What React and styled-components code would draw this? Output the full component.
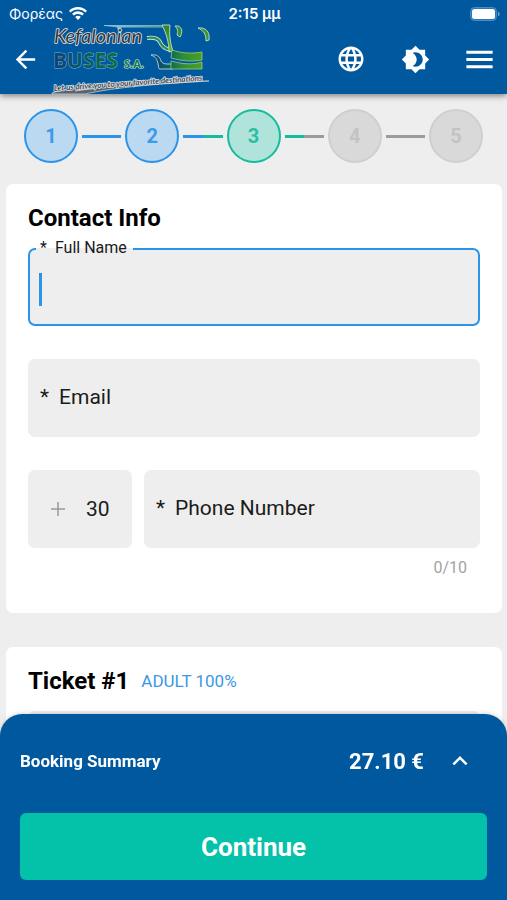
import React, { useState } from 'react';
import styled, { createGlobalStyle, css } from 'styled-components';
import {
  MdArrowBack,
  MdBrightness4,
  MdKeyboardArrowUp,
  MdLanguage,
  MdMenu,
} from 'react-icons/md';

const GlobalStyle = createGlobalStyle`
  * {
    box-sizing: border-box;
  }

  body {
    margin: 0;
    background: #eeeeee;
    color: #000;
    font-family: Roboto, 'Noto Sans', sans-serif;
  }

  button,
  input {
    font-family: inherit;
  }
`

const Page = styled.div`
  height: 100vh;
  overflow: hidden;
`

const Header = styled.header`
  position: relative;
  background: #00589f;
  color: #fff;
  box-shadow: 0 2px 6px rgba(0, 0, 0, 0.45);
`

const StatusBar = styled.div`
  display: grid;
  grid-template-columns: 1fr auto 1fr;
  align-items: center;
  height: 24px;
  padding: 4px 7px 0 9px;
  font-family: Inter, sans-serif;
  font-size: 14px;
  line-height: 20px;
`

const Carrier = styled.div`
  display: flex;
  align-items: center;
  gap: 6px;
`

const Clock = styled.div`
  font-size: 15px;
  font-weight: 600;
`

const BatteryWrap = styled.div`
  display: flex;
  justify-content: flex-end;
`

const Nav = styled.nav`
  display: flex;
  align-items: center;
  height: 70px;
  padding: 0 4px 0 1px;
`

const IconBtn = styled.button`
  display: flex;
  align-items: center;
  justify-content: center;
  width: 48px;
  height: 48px;
  padding: 0;
  border: none;
  background: none;
  color: #fff;
  cursor: pointer;
`

const LogoSvg = styled.svg`
  flex: none;
  overflow: visible;
`

const NavActions = styled.div`
  display: flex;
  gap: 16px;
  margin-left: auto;
`

const Steps = styled.ol`
  display: flex;
  align-items: center;
  margin: 0;
  padding: 15px 24px 21px;
  list-style: none;
`

const stepColors = {
  done: css`
    border-color: #2b94e9;
    background: #bbd9f0;
    color: #3d9aea;
  `,
  active: css`
    border-color: #15bb9d;
    background: #b0e4da;
    color: #2abfa4;
  `,
  todo: css`
    border-color: #cfcfcf;
    background: #d9d9d9;
    color: #c3c3c3;
  `,
}

const Step = styled.li`
  display: flex;
  align-items: center;
  justify-content: center;
  flex: none;
  width: 54px;
  height: 54px;
  border: 2px solid;
  border-radius: 50%;
  font-size: 20px;
  font-weight: 700;
  ${({ $state }) => stepColors[$state]}
`

const StepLine = styled.li`
  flex: 1;
  height: 3px;
  margin: 0 4px;
  background: linear-gradient(
    to right,
    ${({ $from }) => $from} 50%,
    ${({ $to }) => $to} 50%
  );
`

const Card = styled.section`
  margin: 0 5px 34px 6px;
  padding: 20px 22px 35px;
  border-radius: 7px;
  background: #fff;
`

const CardHead = styled.div`
  display: flex;
  align-items: center;
  gap: 12px;
  margin-bottom: 16px;
`

const CardTitle = styled.h2`
  margin: 0;
  font-size: 24px;
  font-weight: 700;
  line-height: 28px;
`

const Fare = styled.span`
  color: #3c97e6;
  font-size: 17px;
`

const Fields = styled.div`
  display: flex;
  flex-direction: column;
  gap: 33px;
`

const PhoneRow = styled.div`
  display: grid;
  grid-template-columns: 104px 1fr;
  gap: 12px;
`

const Field = styled.div`
  position: relative;
  display: flex;
  align-items: center;
  height: 78px;
  border: 2px solid ${({ $active }) => ($active ? '#2b94e9' : '#eeeeee')};
  border-radius: 7px;
  background: #eeeeee;
`

const Input = styled.input`
  flex: 1;
  min-width: 0;
  height: 100%;
  padding: 0 ${({ $inset }) => $inset || 10}px;
  border: none;
  outline: none;
  background: none;
  color: #1b1b1b;
  font-size: 21px;
`

const Label = styled.label`
  position: absolute;
  left: 10px;
  display: flex;
  gap: 10px;
  padding-bottom: 2px;
  color: #1b1b1b;
  font-size: 21px;
  line-height: 24px;
  pointer-events: none;
  ${({ $floating }) =>
    $floating &&
    css`
      top: -12px;
      left: 6px;
      gap: 8px;
      padding: 0 6px 0 4px;
      background: linear-gradient(#fff 50%, #eeeeee 50%);
      font-size: 16px;
      line-height: 20px;
    `}
`

const Caret = styled.span`
  position: absolute;
  top: 23px;
  left: 9px;
  width: 3px;
  height: 33px;
  background: #2b94e9;
`

const Prefix = styled.span`
  display: flex;
  padding-left: 20px;
`

const Counter = styled.div`
  padding-right: 13px;
  color: #a3a3a3;
  font-size: 16px;
  line-height: 20px;
  text-align: right;
`

const PhoneBlock = styled.div`
  display: flex;
  flex-direction: column;
  gap: 10px;
`

const Summary = styled.footer`
  position: fixed;
  right: 0;
  bottom: 0;
  left: 0;
  padding: 23px 20px 20px;
  border-radius: 22px 22px 0 0;
  background: #00589f;
  color: #fff;
  box-shadow: 0 -1px 4px rgba(0, 0, 0, 0.15);
`

const SummaryRow = styled.div`
  display: flex;
  align-items: center;
  margin-bottom: 28px;
  padding-right: 3px;
`

const SummaryTitle = styled.div`
  flex: 1;
  font-size: 17px;
  font-weight: 700;
`

const Price = styled.div`
  margin-right: 12px;
  font-size: 22px;
  font-weight: 700;
`

const ContinueBtn = styled.button`
  width: 100%;
  height: 67px;
  border: none;
  border-radius: 6px;
  background: #04c1a9;
  color: #fff;
  font-size: 26px;
  font-weight: 700;
  cursor: pointer;
`

const WifiIcon = () => (
  <svg width="18" height="14" viewBox="0 0 18 14" fill="#fff" aria-hidden="true">
    <path d="M9 0c3.500 0 6.700 1.400 9 3.700l-1.500 1.700A10.700 10.700 0 0 0 9 2.600c-2.900 0-5.500 1.100-7.500 2.800L0 3.700A12.800 12.800 0 0 1 9 0z" />
    <path d="M9 4.300c2.300 0 4.400.9 5.900 2.400l-1.600 1.800A6.200 6.200 0 0 0 9 6.900c-1.700 0-3.200.6-4.300 1.600L3.100 6.700A8.400 8.400 0 0 1 9 4.300z" />
    <path d="M9 8.700c1.100 0 2.100.4 2.800 1.200L9 13l-2.800-3.100C6.900 9.100 7.900 8.700 9 8.700z" />
  </svg>
)

const BatteryIcon = () => (
  <svg width="30" height="14" viewBox="0 0 30 14" aria-hidden="true">
    <rect x="0.500" y="0.500" width="26" height="13" rx="4" fill="#2f77b3" stroke="#4f8cc0" />
    <rect x="2" y="2" width="23" height="10" rx="2.500" fill="#fff" />
    <path d="M28 4.500c1 .4 1.600 1.300 1.600 2.500S29 9.100 28 9.500z" fill="#6f9fca" />
  </svg>
)

const Logo = () => (
  <LogoSvg width="162" height="70" viewBox="0 0 162 70" role="img" aria-label="Kefalonian Buses S.A.">
    <defs>
      <linearGradient id="busesText" x1="0" x2="1">
        <stop offset="0" stopColor="#123f78" />
        <stop offset="0.6" stopColor="#08605e" />
        <stop offset="1" stopColor="#08733c" />
      </linearGradient>
      <linearGradient id="busBody" x1="0" x2="1">
        <stop offset="0" stopColor="#12684f" />
        <stop offset="0.4" stopColor="#2f8f33" />
        <stop offset="1" stopColor="#4c9f20" />
      </linearGradient>
      <linearGradient id="pillar" x1="0" x2="0" y1="0" y2="1">
        <stop offset="0" stopColor="#2f7f2c" />
        <stop offset="1" stopColor="#5db52a" />
      </linearGradient>
      <linearGradient id="bumper" x1="0" x2="1">
        <stop offset="0" stopColor="#0b3f74" />
        <stop offset="1" stopColor="#12684f" />
      </linearGradient>
      <linearGradient id="roof" x1="0" x2="1">
        <stop offset="0" stopColor="#8fd1f4" />
        <stop offset="1" stopColor="#37824d" />
      </linearGradient>
    </defs>
    {/* road */}
    <path d="M3 69c24-8 80-11 157-12-52 3-92 6-124 13H3z" fill="#5c646b" stroke="#c2ccd4" strokeWidth="0.8" />
    <path d="M26 67l22-3m10-1l22-2" stroke="#d9dfe3" strokeWidth="0.8" />
    {/* bus */}
    <path d="M55 1.500h65l-1 1.600H73l-4 2-1-2.300z" fill="url(#roof)" stroke="#a9d3e6" strokeWidth="0.6" />
    <path d="M98 14c7-1 11 0 13 4 2 5 5 7 11 8" fill="none" stroke="#c8e8df" strokeWidth="4" />
    <path d="M98 14c7-1 11 0 13 4 2 5 5 7 11 8" fill="none" stroke="#2d8a5a" strokeWidth="2.200" />
    <path d="M113 1h8c-1 8 0 18 3 26l-4 1c0-10-3-19-7-27z" fill="url(#pillar)" stroke="#bfe0cf" strokeWidth="0.900" />
    <path d="M102 31c6-1 9 2 10 6 1 2 3 3 6 3h6v5h-13c-2 0-1-2-2-5-1-5-2-7-7-9z" fill="url(#bumper)" stroke="#b8d6e6" strokeWidth="0.900" />
    <path d="M123 26c9 3 19 4 30 2v8c-10 2-20 1-31-2z" fill="url(#busBody)" stroke="#a6d590" strokeWidth="0.700" />
    <path d="M122 37c11 3 21 4 31 1v7h-31z" fill="url(#busBody)" stroke="#a6d590" strokeWidth="0.700" />
    <path d="M126 2h3c4 1 5 6 2 11l-3-2c1-3 1-6-2-9z" fill="#2f8f33" stroke="#bfe0cf" strokeWidth="0.900" />
    <path d="M149 4c8-1 12 4 11 12l-3 1c0-7-2-10-8-13z" fill="#3d9430" stroke="#bfe0cf" strokeWidth="0.900" />
    <g stroke="#dbe5ec" strokeWidth="1.600" paintOrder="stroke" strokeLinejoin="round">
      <text x="5" y="19" fill="#3b3636" fontFamily="Lato, sans-serif" fontSize="20" fontStyle="italic">
        Kefalonian
      </text>
      <text x="4" y="44" fill="url(#busesText)" stroke="#7fb0d4" fontFamily="'Open Sans', sans-serif" fontSize="21" fontWeight="700" strokeWidth="1">
        BUSES
      </text>
      <text x="75" y="44" fill="#087a3c" fontFamily="'Open Sans', sans-serif" fontSize="11" fontWeight="700" strokeWidth="1.200">
        S.A.
      </text>
      <text x="5" y="67" transform="rotate(-4 5 67)" fill="#4a4a50" fontFamily="Lato, sans-serif" fontSize="8" fontWeight="700" fontStyle="italic" strokeWidth="1.600">
        Let us drive you to your favorite destinations
      </text>
    </g>
  </LogoSvg>
)

const PlusIcon = () => (
  <svg width="16" height="16" viewBox="0 0 16 16" stroke="#999" strokeWidth="1.500" aria-hidden="true">
    <path d="M8 1v14M1 8h14" />
  </svg>
)

const App = () => {
  const [fullName, setFullName] = useState('');
  const [email, setEmail] = useState('');
  const [code, setCode] = useState('30');
  const [phone, setPhone] = useState('');

  return (
    <Page>
      <GlobalStyle />
      <Header>
        <StatusBar>
          <Carrier>
            Φορέας
            <WifiIcon />
          </Carrier>
          <Clock>2:15 μμ</Clock>
          <BatteryWrap>
            <BatteryIcon />
          </BatteryWrap>
        </StatusBar>
        <Nav>
          <IconBtn aria-label="Back">
            <MdArrowBack size={29} />
          </IconBtn>
          <Logo />
          <NavActions>
            <IconBtn aria-label="Language">
              <MdLanguage size={30} />
            </IconBtn>
            <IconBtn aria-label="Theme">
              <MdBrightness4 size={29} />
            </IconBtn>
            <IconBtn aria-label="Menu">
              <MdMenu size={35} />
            </IconBtn>
          </NavActions>
        </Nav>
      </Header>

      <main>
        <Steps>
          <Step $state="done">1</Step>
          <StepLine $from="#2b94e9" $to="#2b94e9" />
          <Step $state="done">2</Step>
          <StepLine $from="#2b94e9" $to="#15bb9d" />
          <Step $state="active">3</Step>
          <StepLine $from="#15bb9d" $to="#9b9b9b" />
          <Step $state="todo">4</Step>
          <StepLine $from="#9b9b9b" $to="#9b9b9b" />
          <Step $state="todo">5</Step>
        </Steps>

        <Card>
          <CardHead>
            <CardTitle>Contact Info</CardTitle>
          </CardHead>
          <Fields>
            <Field $active>
              <Input id="fullName" value={fullName} onChange={(e) => setFullName(e.target.value)} />
              <Label htmlFor="fullName" $floating>
                <span>*</span>
                <span>Full Name</span>
              </Label>
              {!fullName && <Caret />}
            </Field>
            <Field>
              <Input id="email" type="email" value={email} onChange={(e) => setEmail(e.target.value)} />
              {!email && (
                <Label htmlFor="email">
                  <span>*</span>
                  <span>Email</span>
                </Label>
              )}
            </Field>
            <PhoneBlock>
              <PhoneRow>
                <Field>
                  <Prefix>
                    <PlusIcon />
                  </Prefix>
                  <Input
                    aria-label="Country code"
                    value={code}
                    onChange={(e) => setCode(e.target.value)}
                    $inset={20}
                  />
                </Field>
                <Field>
                  <Input
                    id="phone"
                    type="tel"
                    maxLength={10}
                    value={phone}
                    onChange={(e) => setPhone(e.target.value)}
                  />
                  {!phone && (
                    <Label htmlFor="phone">
                      <span>*</span>
                      <span>Phone Number</span>
                    </Label>
                  )}
                </Field>
              </PhoneRow>
              <Counter>{phone.length}/10</Counter>
            </PhoneBlock>
          </Fields>
        </Card>

        <Card>
          <CardHead>
            <CardTitle>Ticket #1</CardTitle>
            <Fare>ADULT 100%</Fare>
          </CardHead>
          <Field>
            <Input aria-label="Passenger name" />
          </Field>
        </Card>
      </main>

      <Summary>
        <SummaryRow>
          <SummaryTitle>Booking Summary</SummaryTitle>
          <Price>27.10 €</Price>
          <IconBtn aria-label="Show summary">
            <MdKeyboardArrowUp size={30} />
          </IconBtn>
        </SummaryRow>
        <ContinueBtn>Continue</ContinueBtn>
      </Summary>
    </Page>
  );
}

export default App;
